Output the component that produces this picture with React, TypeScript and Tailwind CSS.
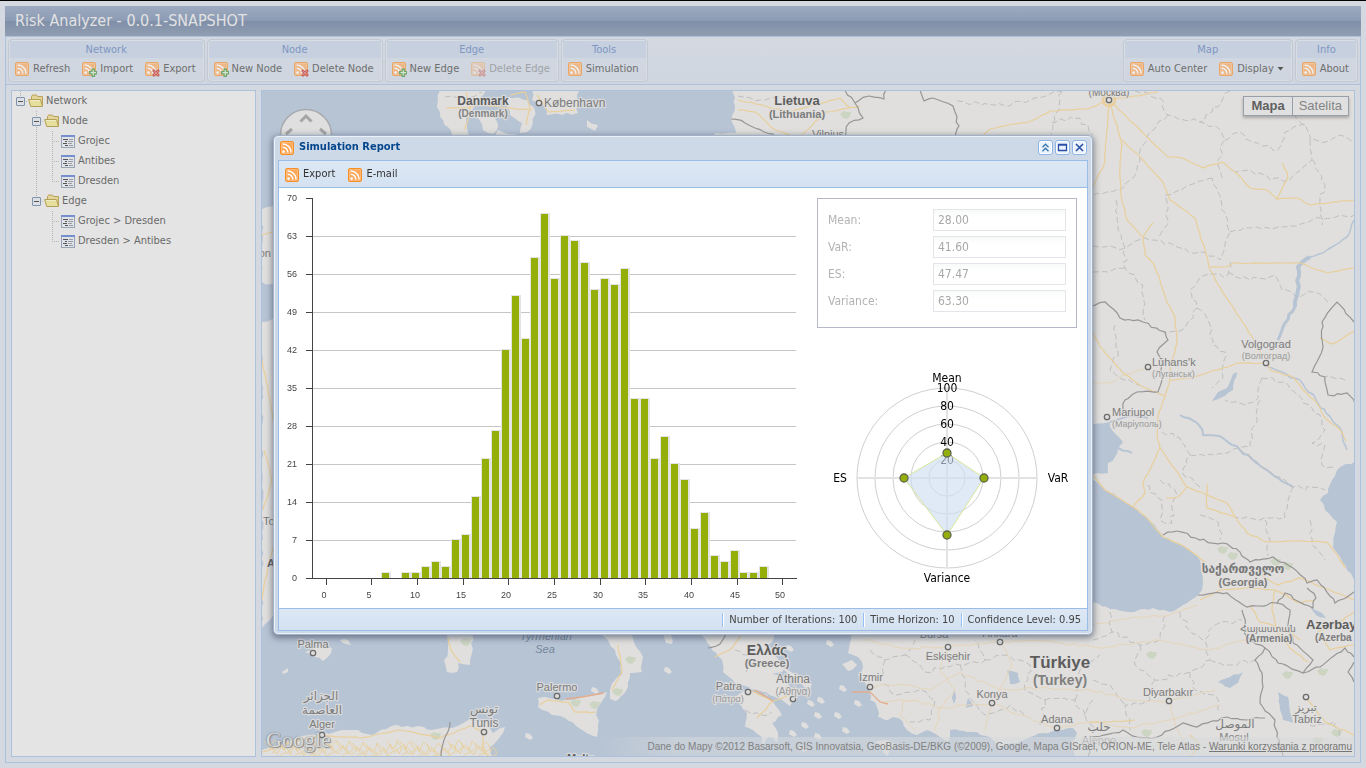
import React from "react";

type Point = [number, number];

const path = (points: Point[], close = false) =>
  "M" + points.map(([x, y]) => `${x} ${y}`).join("L") + (close ? "Z" : "");

/* Breaks straight runs into short irregular steps, as borders and coasts have. */
const rough = (points: Point[], amp: number, seed = 1, close = false) => {
  let s = seed * 7919 + 13;
  const rnd = () => {
    s = (s * 16807) % 2147483647;
    return s / 2147483647 - 0.5;
  };
  const src = close ? [...points, points[0]] : points;
  const out: Point[] = [src[0]];
  for (let i = 1; i < src.length; i++) {
    const [ax, ay] = src[i - 1];
    const [bx, by] = src[i];
    const n = Math.max(1, Math.round(Math.hypot(bx - ax, by - ay) / 5));
    for (let k = 1; k < n; k++) {
      const t = k / n;
      out.push([
        Math.round((ax + (bx - ax) * t + rnd() * amp) * 10) / 10,
        Math.round((ay + (by - ay) * t + rnd() * amp) * 10) / 10,
      ]);
    }
    out.push([bx, by]);
  }
  return path(out, close);
};

/* ---------------------------------------------------------------- icons */

type Badge = "plus" | "cross";

function FeedIcon({ badge, className = "" }: { badge?: Badge; className?: string }) {
  return (
    <svg width="16" height="16" viewBox="0 0 16 16" className={`shrink-0 ${className}`} aria-hidden="true">
      <rect x="1.500" y="1.500" width="13" height="13" rx="1.500" fill="#fda85a" stroke="#f98f22" />
      <rect x="2.500" y="2.500" width="11" height="11" rx="0.500" fill="none" stroke="#fbbf85" strokeWidth="0.800" />
      <circle cx="4.600" cy="11.600" r="1.300" fill="#fff" />
      <path d="M3.600 7.200a5.100 5.100 0 0 1 5.200 5.400M3.600 4.100a8.300 8.300 0 0 1 8.400 8.500" fill="none" stroke="#fff" strokeWidth="1.500" />
      {badge === "plus" && (
        <g>
          <path d="M10.500 7.500h3.500v2.500h2v3.500h-2V16h-3.500v-2.500H8v-3.500h2.500z" fill="#3f8f34" />
          <path d="M12.300 9v5.500M9.500 11.700h5.500" stroke="#d5efc6" strokeWidth="1.200" />
        </g>
      )}
      {badge === "cross" && (
        <g>
          <path d="M9 9l6 6M15 9l-6 6" stroke="#c0281f" strokeWidth="2.600" />
          <path d="M9.800 9.800l4.400 4.400M14.200 9.800l-4.400 4.400" stroke="#ee8d84" strokeWidth="0.700" />
        </g>
      )}
    </svg>
  );
}

function FolderIcon() {
  return (
    <svg width="16" height="16" viewBox="0 0 16 16" className="shrink-0" aria-hidden="true">
      <path d="M3.500 13V3.500l1-1.500h4l1 1.500h5V13z" fill="#e2d49a" stroke="#b9a15c" />
      <path d="M.7 6.500h11.800l2 7H2.700z" fill="#e5de9c" stroke="#b4a056" />
      <path d="M2 7.500h9.700" stroke="#f0ecc4" />
    </svg>
  );
}

function LeafIcon() {
  return (
    <svg width="16" height="16" viewBox="0 0 16 16" className="shrink-0" aria-hidden="true">
      <rect x="1.500" y="2.500" width="13" height="12" fill="#dfe2e8" stroke="#9aa3b3" />
      <path d="M1 3h14" stroke="#7590cc" strokeWidth="2" />
      <path d="M3 6.500h5M5 8.500h2M3 10.500h4M5 12.500h3" stroke="#555" />
      <path d="M9 6.500h4M8 8.500h5M8 10.500h4M9 12.500h4" stroke="#9a9ea5" />
    </svg>
  );
}

function Expander({ top, bottom }: { top: boolean; bottom: boolean }) {
  return (
    <svg width="16" height="20" viewBox="0 0 16 20" className="shrink-0" aria-hidden="true">
      {top && <path d="M8.500 0v6" stroke="#b5b5b5" strokeDasharray="1 1" />}
      {bottom && <path d="M8.500 16v4" stroke="#b5b5b5" strokeDasharray="1 1" />}
      <path d="M14 10.500h2" stroke="#b5b5b5" strokeDasharray="1 1" />
      <rect x="4.500" y="6.500" width="8" height="8" rx="0.500" fill="#dcdfe4" stroke="#8294ad" />
      <path d="M6 10.500h5" stroke="#555" />
    </svg>
  );
}

function Elbow({ kind }: { kind: "line" | "tee" | "end" | "none" }) {
  return (
    <svg width="16" height="20" viewBox="0 0 16 20" className="shrink-0" aria-hidden="true">
      {kind !== "none" && (
        <path d={kind === "end" ? "M8.500 0v11" : "M8.500 0v20"} stroke="#b5b5b5" strokeDasharray="1 1" />
      )}
      {(kind === "tee" || kind === "end") && <path d="M8 10.500h7" stroke="#b5b5b5" strokeDasharray="1 1" />}
    </svg>
  );
}

/* -------------------------------------------------------------- toolbar */

type Action = { label: string; badge?: Badge; disabled?: boolean; menu?: boolean };

function ButtonGroup({ title, actions }: { title: string; actions: Action[] }) {
  return (
    <section className="flex flex-col rounded-sm border border-[#c2c9d3] p-px shadow-[inset_0_0_0_1px_#d8dce3]">
      <h2 className="h-[17px] bg-[#c6d0df] text-center text-[11px] leading-[18px] text-[#7f97c2]">{title}</h2>
      <div className="flex h-[22px] items-center gap-2 px-1">
        {actions.map((a) => (
          <button
            key={a.label}
            type="button"
            disabled={a.disabled}
            className={`flex items-center gap-[3px] pr-[3px] text-[11px] leading-4 whitespace-nowrap text-[#6e6e6e] ${a.disabled ? "opacity-50" : ""}`}
          >
            <FeedIcon badge={a.badge} className="opacity-65" />
            {a.label}
            {a.menu && (
              <svg width="7" height="4" viewBox="0 0 7 4" aria-hidden="true">
                <path d="M0.500 0h6L3.500 3.500z" fill="#555" />
              </svg>
            )}
          </button>
        ))}
      </div>
    </section>
  );
}

/* ----------------------------------------------------------------- tree */

type Cell = "line" | "tee" | "end" | "none" | "open" | "openRoot" | "openLast";

const TREE: { label: string; cells: Cell[] }[] = [
  { label: "Network", cells: ["openRoot"] },
  { label: "Node", cells: ["none", "open"] },
  { label: "Grojec", cells: ["none", "line", "tee"] },
  { label: "Antibes", cells: ["none", "line", "tee"] },
  { label: "Dresden", cells: ["none", "line", "end"] },
  { label: "Edge", cells: ["none", "openLast"] },
  { label: "Grojec > Dresden", cells: ["none", "none", "tee"] },
  { label: "Dresden > Antibes", cells: ["none", "none", "end"] },
];

function Tree() {
  return (
    <ul className="text-[11px] text-[#6a6a6a]">
      {TREE.map(({ label, cells }) => {
        const folder = cells[cells.length - 1].startsWith("open");
        return (
          <li key={label} className="flex h-5 items-center">
            {cells.map((c, i) =>
              c === "open" || c === "openRoot" || c === "openLast" ? (
                <Expander key={i} top bottom={c === "open"} />
              ) : (
                <Elbow key={i} kind={c} />
              )
            )}
            {folder ? <FolderIcon /> : <LeafIcon />}
            <span className="pl-0.5 whitespace-nowrap">{label}</span>
          </li>
        );
      })}
    </ul>
  );
}

/* ------------------------------------------------------------------ map */

const LAND: Point[][] = [
  [[440,90],[437,107],[443,120],[448,127],[452,138],[470,138],[467,128],[466,117],[472,110],[477,100],[486,90]],
  [[477,117],[487,113],[495,118],[498,127],[493,134],[483,130]],
  [[508,97],[527,100],[535,110],[533,123],[527,132],[520,133],[522,123],[510,115],[507,107]],
  [[532,90],[580,90],[577,100],[578,113],[562,115],[547,115],[542,103],[532,100]],
  [[587,120],[598,125],[595,131],[587,127]],
  [[498,130],[508,134],[520,136],[520,140],[495,140]],
  [[262,209],[276,206],[276,286],[262,282]],
  [[262,322],[276,318],[276,612],[270,620],[262,628]],
  [[305,652],[318,647],[332,648],[327,658],[323,661],[315,657]],
  [[340,640],[348,640],[351,645],[343,643]],
  [[282,672],[288,668],[288,672],[283,674]],
  [[445,630],[473,630],[472,653],[470,665],[458,663],[457,672],[447,672],[444,660],[448,650]],
  [[595,630],[632,630],[635,645],[643,657],[642,672],[630,673],[628,687],[618,700],[610,699],[610,690],[615,680],[622,675],[621,663],[615,650],[608,640]],
  [[538,698],[545,697],[565,700],[582,697],[607,692],[597,710],[598,730],[597,737],[582,730],[565,718],[552,715],[538,707]],
  [[262,750],[275,745],[308,735],[335,732],[352,730],[372,735],[397,725],[402,727],[418,726],[432,730],[442,728],[455,727],[468,720],[488,723],[493,733],[505,727],[500,737],[490,747],[492,757],[262,757]],
  [[663,630],[673,630],[672,644],[666,643]],
  [[700,630],[712,650],[722,660],[723,672],[735,683],[755,690],[775,697],[790,706],[797,700],[795,690],[785,680],[772,674],[782,672],[785,668],[775,655],[768,645],[778,630]],
  [[735,697],[740,703],[747,713],[745,727],[753,730],[762,737],[763,748],[768,737],[773,738],[777,743],[778,733],[772,723],[778,717],[782,715],[773,702],[763,692],[750,688]],
  [[783,669],[797,674],[812,684],[810,689],[796,682]],
  [[842,664],[852,660],[857,665],[848,671]],
  [[875,742],[885,740],[895,744],[888,756],[882,750]],
  [[852,630],[848,653],[858,657],[863,667],[858,675],[865,682],[870,692],[870,700],[877,707],[878,717],[885,720],[893,717],[903,722],[907,730],[917,735],[927,730],[940,737],[948,742],[950,730],[973,732],[990,737],[1000,747],[1017,743],[1030,737],[1043,733],[1073,728],[1077,733],[1072,742],[1075,757],[1356,757],[1356,88],[732,88],[735,106],[731,119],[736,133],[716,133],[707,138]],
];

const WATER: Point[][] = [
  [[1060,423],[1093,424],[1110,422],[1112,430],[1123,442],[1118,448],[1115,457],[1108,463],[1108,473],[1060,474]],
  [[1060,480],[1093,480],[1105,490],[1117,497],[1133,507],[1147,518],[1163,537],[1187,548],[1200,560],[1203,580],[1202,590],[1198,595],[1187,603],[1170,612],[1153,608],[1130,612],[1110,609],[1093,602],[1060,600]],
  [[1356,461],[1340,467],[1332,480],[1328,493],[1320,500],[1325,510],[1337,522],[1335,533],[1333,547],[1343,563],[1347,570],[1356,582]],
  [[1237,372],[1233,390],[1212,401],[1218,392],[1227,388],[1233,374]],
  [[1218,682],[1230,677],[1243,672],[1238,683],[1230,688]],
  [[1278,692],[1288,697],[1293,723],[1283,720]],
  [[1007,670],[1018,673],[1020,682],[1010,684]],
  [[953,690],[956,698],[954,704],[952,698]],
  [[968,698],[973,706],[966,708]],
  [[1310,607],[1322,613],[1326,618],[1316,615]],
  [[735,690],[748,688],[757,690],[772,697],[778,700],[765,697],[752,692]],
];

const ROADS: Point[][] = [
  [[1109,100],[1088,109],[1051,111],[1031,121],[990,129],[982,137]],
  [[1109,100],[1107,130],[1104,165],[1090,192]],
  [[1109,100],[1100,94],[1092,97]],
  [[1109,100],[1135,96],[1158,92]],
  [[1109,100],[1118,130],[1122,145],[1120,170],[1121,195],[1127,220],[1143,237],[1145,255],[1153,263],[1160,280],[1167,303],[1175,317],[1177,343],[1170,367],[1170,380],[1165,397],[1158,417],[1157,437],[1160,448],[1143,483],[1145,493],[1133,507]],
  [[1143,237],[1153,223]],
  [[1109,100],[1140,130],[1152,142],[1168,157],[1182,158],[1203,168],[1222,162],[1235,172],[1250,188],[1267,190],[1277,199],[1297,198],[1310,205],[1354,200]],
  [[1277,199],[1288,177],[1283,163]],
  [[1122,140],[1143,160],[1163,182],[1170,200],[1195,218],[1207,257],[1210,270],[1223,293],[1240,318],[1253,338],[1267,363],[1270,370],[1293,377],[1303,390],[1317,403],[1325,418],[1340,430],[1346,441]],
  [[1210,267],[1227,267],[1233,263],[1300,263],[1327,273],[1354,268]],
  [[1170,380],[1190,378],[1223,368],[1237,363],[1264,363]],
  [[1090,328],[1103,350],[1123,373],[1143,387],[1165,396]],
  [[1160,448],[1187,487],[1207,495],[1227,503],[1235,517],[1247,533],[1267,542],[1297,541],[1327,542],[1335,552],[1345,568]],
  [[1207,484],[1207,508],[1235,517]],
  [[1090,472],[1105,490],[1117,497],[1133,507],[1147,518],[1163,537],[1185,547],[1205,562]],
  [[1187,487],[1178,497],[1166,498]],
  [[1320,338],[1333,344],[1354,331]],
  [[1200,600],[1220,590],[1245,588],[1275,590],[1300,603],[1315,600]],
  [[1275,590],[1272,610],[1277,632],[1290,648],[1308,662]],
  [[1262,575],[1278,585],[1300,578],[1330,590],[1354,600]],
  [[1250,605],[1260,622],[1282,628],[1300,640]],
  [[1354,612],[1335,625],[1318,632],[1330,650],[1354,645]],
  [[1090,722],[1110,722],[1135,720]],
  [[1190,735],[1200,745],[1190,757]],
  [[1306,697],[1325,722],[1354,735]],
  [[510,95],[525,92],[530,108],[526,125]],
  [[446,108],[468,108],[480,104],[505,108],[532,110]],
  [[466,92],[470,108],[465,130]],
  [[537,95],[548,112],[575,110]],
  [[738,110],[755,112],[775,130],[800,138]],
  [[738,100],[765,106],[790,112],[840,98],[850,108]],
  [[798,138],[826,112],[860,106]],
  [[715,657],[732,648],[742,634]],
  [[750,690],[773,701],[790,695]],
  [[773,701],[757,718]],
  [[448,638],[452,652],[460,662]],
  [[618,645],[622,672],[612,690]],
  [[540,705],[548,700],[568,702],[575,712],[596,712]],
  [[262,752],[290,742],[322,736],[360,738],[400,730],[440,738],[470,726],[484,732]],
  [[484,732],[482,745],[488,756]],
  [[262,235],[275,232]],[[262,360],[270,400],[275,440]],[[264,450],[272,480],[263,510]],
  [[275,540],[265,580],[262,600]],
];

const FAINT_ROADS: Point[][] = [
  [[863,640],[900,648],[948,647],[1000,642],[1040,640],[1100,648],[1160,640],[1210,650],[1247,640]],
  [[870,687],[900,684],[930,690],[960,672],[1000,690],[1040,688],[1090,690],[1130,700],[1169,701],[1215,690]],
  [[885,702],[915,700],[940,708],[992,703],[1020,715],[1057,728]],
  [[948,647],[940,670],[955,690],[940,708],[935,730]],
  [[1000,642],[1012,665],[992,703],[985,730]],
  [[1057,728],[1090,722],[1130,728],[1170,720],[1220,705]],
  [[1169,701],[1175,725],[1190,755]],
  [[905,700],[900,715],[915,730]],
  [[1093,625],[1130,618],[1165,616],[1198,605]],
  [[1093,382],[1110,383],[1125,375],[1148,367]],
];

const COUNTRY: Point[][] = [
  [[731,119],[745,123],[755,128],[773,134],[775,140]],
  [[845,90],[855,103],[863,118],[849,123],[845,138]],
  [[855,103],[869,96],[884,99],[886,90]],
  [[920,90],[924,101],[933,98],[953,106],[959,126],[953,138]],
  [[1090,306],[1105,302],[1120,318],[1143,322],[1165,332],[1168,340],[1157,352],[1162,363],[1162,380],[1158,392],[1137,392],[1125,400],[1123,409]],
  [[1354,322],[1337,302],[1330,310],[1322,322],[1323,347],[1312,372],[1325,377],[1328,395],[1347,393],[1355,404]],
  [[1163,535],[1177,531],[1200,540],[1223,543],[1240,552],[1250,562],[1273,557],[1293,568],[1307,583],[1317,580],[1335,603],[1354,592]],
  [[1198,595],[1227,593],[1247,607],[1277,603],[1285,593],[1313,608],[1316,598],[1307,588]],
  [[1242,610],[1247,637],[1265,648],[1278,663],[1303,673],[1313,660],[1293,643],[1288,625],[1290,610],[1277,603]],
  [[1265,648],[1255,660],[1262,673],[1263,687],[1260,703],[1275,720],[1277,737],[1283,757]],
  [[1303,673],[1320,667],[1345,648],[1354,657]],
  [[1354,662],[1348,672],[1354,682]],
  [[1113,733],[1123,730],[1137,737],[1157,737],[1183,723],[1197,727],[1227,717],[1247,720],[1265,718]],
  [[1113,733],[1090,737],[1088,757]],
  [[450,722],[444,740],[441,757]],
  [[708,648],[720,644],[726,634]],
];

const REGIONS: Point[][] = [
  [[957,101],[1005,106],[1030,100],[1062,92]],
  [[1062,92],[1055,120],[1052,138]],
  [[1052,122],[1080,118],[1093,135]],
  [[1135,91],[1160,98],[1168,115],[1200,122],[1220,130],[1225,140],[1218,165],[1222,178]],
  [[1230,91],[1212,112],[1200,122]],
  [[1225,140],[1240,132],[1260,145],[1278,150],[1285,132],[1305,125]],
  [[1285,110],[1305,125],[1310,140],[1325,142],[1340,135],[1354,140]],
  [[1310,140],[1312,160],[1290,180],[1270,180],[1250,170],[1235,172]],
  [[1168,115],[1150,132],[1140,150],[1135,175],[1120,190],[1093,196]],
  [[1212,178],[1190,185],[1165,195],[1168,220],[1160,238]],
  [[1312,160],[1325,185],[1320,200],[1322,225]],
  [[1093,246],[1125,248],[1145,238],[1180,248],[1207,255],[1220,260],[1230,232],[1222,205],[1212,178]],
  [[1230,232],[1250,228],[1290,226],[1320,218],[1354,215]],
  [[1116,200],[1118,225],[1125,248],[1125,268],[1143,285],[1145,320]],
  [[1093,272],[1125,268]],
  [[1230,262],[1228,275],[1205,275],[1190,290],[1197,308],[1210,325],[1213,345],[1225,352],[1223,378],[1212,388]],
  [[1228,272],[1250,280],[1275,275],[1282,290],[1300,297],[1315,292],[1328,302]],
  [[1197,308],[1185,328],[1163,332]],
  [[1115,325],[1118,350],[1110,370],[1120,378],[1140,385]],
  [[1262,378],[1258,398],[1245,405],[1225,400]],
  [[1262,378],[1285,382],[1303,403],[1320,415],[1325,430],[1312,443],[1325,445],[1322,465],[1333,467]],
  [[1260,400],[1255,425],[1250,447],[1238,448],[1215,455],[1190,455]],
  [[1162,432],[1180,438],[1190,455],[1182,472],[1200,487]],
  [[1240,450],[1267,470],[1293,487],[1325,490]],
  [[1293,487],[1285,518],[1260,520],[1235,517]],
  [[1160,480],[1175,490],[1172,523],[1160,520],[1162,500],[1145,485]],
  [[1200,515],[1218,522],[1220,540]],
  [[1265,520],[1270,540],[1268,556]],
  [[1310,520],[1312,545],[1325,560]],
  [[1345,380],[1325,377]],
  [[1110,612],[1112,632],[1140,645],[1160,640],[1165,616]],
  [[1093,640],[1112,632]],
  [[1140,645],[1135,665],[1155,680],[1190,672],[1210,660],[1205,640],[1215,625],[1242,620]],
  [[1180,612],[1190,630],[1205,640]],
  [[1210,660],[1230,665],[1255,660]],
  [[1155,680],[1150,700],[1125,705],[1130,730]],
  [[1190,672],[1195,690],[1215,695],[1220,712]],
  [[1093,680],[1110,685],[1125,705]],
  [[1093,700],[1085,715],[1095,728]],
  [[870,650],[885,660],[905,655],[915,640]],
  [[885,660],[880,680],[895,695],[920,690],[935,700],[930,720],[910,722]],
  [[905,655],[925,672],[960,665],[985,660],[975,640]],
  [[985,660],[1005,655],[1030,665],[1025,690],[1045,700],[1040,725]],
  [[960,665],[965,690],[985,715],[1010,705],[1025,715]],
  [[1045,700],[1075,700],[1085,715]],
  [[1075,700],[1080,670],[1100,655]],
  [[735,650],[750,660],[745,675]],
  [[745,710],[760,715],[772,712]],
  [[738,96],[760,100],[780,94]],
  [[445,97],[470,97],[482,93]],
  [[1310,725],[1335,722],[1340,740]],
];

const AFRICAN_CELLS: Point[] = Array.from({ length: 33 }, (_, i) => [270 + i * 6.8, 741 + ((i * 5) % 9)] as Point);

const ISLETS: Point[] = [
  [665, 667], [808, 700], [815, 712], [827, 640], [840, 685], [835, 712], [843, 727], [802, 722], [790, 730],
  [815, 733], [855, 700], [800, 745], [725, 682], [592, 687], [526, 733], [787, 645], [818, 697],
];

const PARKS: Point[] = [
  [845, 115], [1222, 550], [1232, 556], [1275, 562], [1287, 566], [1287, 675], [1322, 672], [1336, 733],
  [1151, 655], [575, 703], [594, 705], [630, 660], [617, 692], [465, 642], [1146, 733], [1317, 741], [435, 736],
];

type Label = {
  x: number;
  y: number;
  t: string;
  s: number;
  b?: boolean;
  a?: "start" | "middle" | "end";
  c?: string;
  i?: boolean;
};

const LABELS: Label[] = [
  { x: 483, y: 105, t: "Danmark", s: 12, b: true },
  { x: 483, y: 117, t: "(Denmark)", s: 10, b: true, c: "#858585" },
  { x: 544, y: 107, t: "København", s: 12, a: "start" },
  { x: 797, y: 105, t: "Lietuva", s: 13, b: true },
  { x: 797, y: 118, t: "(Lithuania)", s: 11, b: true, c: "#7c7c7c" },
  { x: 828, y: 138, t: "Vilnius", s: 11 },
  { x: 1109, y: 96, t: "(Москва)", s: 10 },
  { x: 1266, y: 348, t: "Volgograd", s: 11 },
  { x: 1266, y: 359, t: "(Волгоград)", s: 9, c: "#999" },
  { x: 1152, y: 366, t: "Lūhans'k", s: 11, a: "start" },
  { x: 1152, y: 377, t: "(Луганськ)", s: 9, a: "start", c: "#999" },
  { x: 1112, y: 416, t: "Mariupol", s: 11, a: "start" },
  { x: 1112, y: 427, t: "(Маріуполь)", s: 9, a: "start", c: "#999" },
  { x: 1243, y: 573, t: "საქართველო", s: 12, b: true, c: "#777" },
  { x: 1243, y: 586, t: "(Georgia)", s: 11, b: true, c: "#7c7c7c" },
  { x: 1268, y: 632, t: "Հայաստան", s: 9, c: "#777" },
  { x: 1269, y: 642, t: "(Armenia)", s: 10, b: true, c: "#7c7c7c" },
  { x: 1306, y: 629, t: "Azərbay", s: 13, b: true, a: "start" },
  { x: 1315, y: 641, t: "(Azerba", s: 10, b: true, a: "start", c: "#7c7c7c" },
  { x: 1060, y: 668, t: "Türkiye", s: 17, b: true },
  { x: 1060, y: 685, t: "(Turkey)", s: 14, b: true, c: "#808080" },
  { x: 1168, y: 696, t: "Diyarbakır", s: 11 },
  { x: 1057, y: 723, t: "Adana", s: 11 },
  { x: 1099, y: 731, t: "حلب", s: 12 },
  { x: 1099, y: 744, t: "Aleppo", s: 11, c: "#999" },
  { x: 1235, y: 728, t: "الموصل", s: 12 },
  { x: 1234, y: 741, t: "Mosul", s: 11, c: "#858585" },
  { x: 1306, y: 711, t: "تبريز", s: 11 },
  { x: 1307, y: 723, t: "Tabriz", s: 11 },
  { x: 871, y: 681, t: "Izmir", s: 11 },
  { x: 948, y: 660, t: "Eskişehir", s: 11 },
  { x: 934, y: 638, t: "Bursa", s: 11 },
  { x: 1000, y: 637, t: "Ankara", s: 11 },
  { x: 992, y: 698, t: "Konya", s: 11 },
  { x: 767, y: 655, t: "Ελλάς", s: 14, b: true },
  { x: 767, y: 667, t: "(Greece)", s: 11, b: true, c: "#7c7c7c" },
  { x: 793, y: 683, t: "Athina", s: 12 },
  { x: 793, y: 695, t: "(Αθήνα)", s: 10, c: "#999" },
  { x: 729, y: 690, t: "Patra", s: 11 },
  { x: 728, y: 702, t: "(Πάτρα)", s: 9, c: "#999" },
  { x: 313, y: 648, t: "Palma", s: 11 },
  { x: 557, y: 691, t: "Palermo", s: 11 },
  { x: 546, y: 640, t: "Tyrrhenian", s: 11, i: true, c: "#76869b" },
  { x: 545, y: 653, t: "Sea", s: 11, i: true, c: "#76869b" },
  { x: 321, y: 700, t: "الجزائر", s: 12 },
  { x: 322, y: 714, t: "العاصمة", s: 12 },
  { x: 322, y: 728, t: "Alger", s: 11 },
  { x: 484, y: 713, t: "تونس", s: 12 },
  { x: 484, y: 727, t: "Tunis", s: 12 },
  { x: 581, y: 762, t: "Malta", s: 11, b: true },
  { x: 271, y: 257, t: "on", s: 11, a: "end" },
  { x: 263, y: 525, t: "To", s: 11, a: "start" },
  { x: 267, y: 567, t: "A", s: 11, b: true, a: "start" },
];

const CITIES: Point[] = [
  [539, 103], [1266, 363], [1148, 367], [1107, 417], [1169, 701], [1057, 728], [1306, 697], [870, 687],
  [948, 647], [1000, 642], [992, 703], [793, 699], [748, 692], [313, 653], [557, 696], [322, 735],
  [484, 732], [1109, 100],
];

function MapDrawing() {
  return (
    <svg
      viewBox="262 91 1092 665"
      preserveAspectRatio="xMidYMid slice"
      className="block h-full w-full font-['Liberation_Sans','DejaVu_Sans',sans-serif]"
      role="img"
      aria-label="Map of Europe"
    >
      <rect x="262" y="91" width="1092" height="665" fill="#b7c4d4" />
      <g fill="#e0dfdd">
        {LAND.map((p, i) => (
          <path key={i} d={rough(p, 3, i + 1, true)} />
        ))}
        {ISLETS.map(([x, y]) => (
          <path key={`${x}-${y}`} d={`M${x} ${y}l4 1l3 4l-3 2l-5 -3z`} />
        ))}
      </g>
      <g fill="#b7c4d4">
        {WATER.map((p, i) => (
          <path key={i} d={rough(p, 2.5, i + 40, true)} />
        ))}
      </g>
      <g fill="#cbd5c1">
        {PARKS.map(([x, y]) => (
          <path key={`${x}-${y}`} d={`M${x - 5} ${y - 1}l4 -3l3 1l4 0l-1 4l-3 3l-4 -1z`} />
        ))}
      </g>
      <g fill="none" stroke="#b7c4d4" strokeWidth="2">
        <path d={rough([[1354,220],[1347,237],[1327,250],[1310,257]], 2, 3)} strokeWidth="1.500" />
        <path d={rough([[1310,257],[1298,267],[1298,290],[1295,307]], 3, 4)} strokeWidth="4" />
        <path d={rough([[1295,307],[1285,323],[1278,340]], 2, 5)} strokeWidth="3" />
        <path d={rough([[1180,415],[1197,423],[1203,435],[1223,438],[1240,450],[1267,470],[1293,487]], 3, 6)} />
        <path d={rough([[1268,367],[1300,380],[1318,403],[1342,432],[1347,450]], 3, 7)} strokeWidth="1.500" />
        <path d={rough([[1118,448],[1132,453]], 2, 8)} />
        <path d={rough([[1110,422],[1130,416],[1148,418]], 2, 9)} />
      </g>
      <g fill="none" stroke="#bfbfbf" strokeDasharray="6 3">
        {REGIONS.map((p, i) => (
          <path key={i} d={rough(p, 4.5, i + 80)} />
        ))}
      </g>
      <g fill="none" stroke="#e6d5b8">
        {FAINT_ROADS.map((p, i) => (
          <path key={i} d={rough(p, 2.5, i + 300)} />
        ))}
      </g>
      <g fill="none" stroke="#e8cf9b" strokeWidth="1.200">
        {ROADS.map((p, i) => (
          <path key={i} d={rough(p, 1.2, i + 160)} />
        ))}
        {AFRICAN_CELLS.map(([x, y], i) => (
          <path key={i} d={rough([[x - 6, y], [x, y + 8], [x + 5, y - 1], [x + 9, y + 6], [x + 2, y + 12]], 3, i + 220)} strokeWidth="0.900" />
        ))}
        <circle cx="1109" cy="100" r="6" strokeWidth="2.500" />
      </g>
      <path d="M870 692h-18M870 692l10 10l8 2M755 690l18 11M566 699l16 -2l22 -4" fill="none" stroke="#e3ac8c" strokeWidth="1.300" />
      <g fill="none" stroke="#969696" strokeWidth="1.200">
        {COUNTRY.map((p, i) => (
          <path key={i} d={rough(p, 3, i + 260)} />
        ))}
      </g>
      <g fill="#dedede" stroke="#6c6c6c" strokeWidth="1.300">
        {CITIES.map(([x, y]) => (
          <circle key={`${x}-${y}`} cx={x} cy={y} r="2.700" />
        ))}
      </g>
      <g stroke="#e0dfdd" strokeWidth="2.500" strokeLinejoin="round" style={{ paintOrder: "stroke" }}>
        {LABELS.map((l) => (
          <text
            key={l.t}
            x={l.x}
            y={l.y}
            fontSize={l.s}
            fontWeight={l.b ? 700 : 400}
            fontStyle={l.i ? "italic" : "normal"}
            textAnchor={l.a ?? "middle"}
            fill={l.c ?? (l.b ? "#5d5d5d" : "#7c7c7c")}
            strokeOpacity={l.i ? 0 : 0.8}
          >
            {l.t}
          </text>
        ))}
      </g>
    </svg>
  );
}

function MapPanel() {
  return (
    <main className="relative flex-1 overflow-hidden border border-[#acc1dc]">
      <div className="absolute inset-0">
        <MapDrawing />
      </div>
      <svg width="54" height="54" viewBox="0 0 54 54" className="absolute top-[17px] left-[17px]" aria-hidden="true">
        <circle cx="27" cy="27" r="25.500" fill="#dfdfdf" stroke="#a7abb0" strokeWidth="1.500" />
        <path d="M21.500 13.500l5.500-5.500l5.500 5.500M7 26l6-5M47 26l-6-5" fill="none" stroke="#a5a5a5" strokeWidth="3" />
      </svg>
      <div className="absolute top-[5px] right-[5px] flex border border-[#999fa8] bg-[#e0e0e0] font-['Liberation_Sans',sans-serif] text-[13px] leading-[18px] shadow-[0_2px_3px_rgba(0,0,0,0.25)]">
        <button type="button" className="border-r border-[#999fa8] px-[7px] font-bold text-[#606060]">Mapa</button>
        <button type="button" className="px-1.5 text-[#858585]">Satelita</button>
      </div>
      <span className="absolute bottom-0 left-1 font-['Liberation_Serif',serif] text-[22px] leading-8 text-[#d8dadb] [text-shadow:0_0_2px_#6f7378,1px_1px_1px_#8c9096]">
        Google
      </span>
      <footer className="absolute right-0 bottom-0 bg-linear-to-r from-[#d4d8dc00] via-[#d4d8dc90] via-10% to-[#d9dadb90] pr-0.5 pl-12 font-['Liberation_Sans',sans-serif] text-[10px] leading-[19px] whitespace-nowrap text-[#808080]">
        Dane do Mapy ©2012 Basarsoft, GIS Innovatsia, GeoBasis-DE/BKG (©2009), Google, Mapa GISrael, ORION-ME, Tele Atlas -{" "}
        <a href="#terms" className="text-[#777] underline">Warunki korzystania z programu</a>
      </footer>
    </main>
  );
}

/* --------------------------------------------------------------- report */

const HISTOGRAM: Point[] = [
  [382, 1], [402, 1], [412, 1], [422, 2], [432, 3], [442, 2], [452, 7], [462, 8], [472, 15], [482, 22],
  [492, 27], [502, 42], [512, 52], [522, 44], [531, 59], [541, 67], [551, 55], [561, 63], [571, 62],
  [581, 58], [591, 53], [601, 55], [611, 54], [621, 57], [631, 33], [641, 33], [651, 22], [661, 26],
  [671, 21], [681, 18], [691, 9], [701, 12], [711, 4], [721, 3], [731, 5], [740, 1], [750, 1], [760, 2],
];

const X_TICKS = [326, 371, 417, 463, 508, 554, 600, 645, 691, 737, 782];
const Y_TICKS = [0, 7, 14, 21, 28, 35, 42, 49, 56, 63, 70];

function Histogram() {
  const yOf = (v: number) => 578 - Math.round((v * 380) / 70);
  return (
    <svg viewBox="279 188 530 420" className="w-[530px] font-['Liberation_Sans',sans-serif]" role="img" aria-label="Histogram of simulation results">
      {Y_TICKS.slice(1, -1).map((v) => (
        <path key={v} d={`M313 ${yOf(v) + 0.5}H796`} stroke="#c6c6c6" />
      ))}
      {HISTOGRAM.map(([x, v]) => (
        <rect key={x} x={x - 1} y={yOf(v) - 1} width="10" height={579 - yOf(v)} fill="#e4e4e4" />
      ))}
      {HISTOGRAM.map(([x, v]) => (
        <rect key={x} x={x} y={yOf(v)} width="7" height={578 - yOf(v)} fill="#94ae0a" />
      ))}
      <path d="M312.500 198V578.500H797" fill="none" stroke="#444" />
      {Y_TICKS.map((v) => (
        <path key={v} d={`M306 ${yOf(v) + 0.5}h7`} stroke="#444" />
      ))}
      {X_TICKS.map((x) => (
        <path key={x} d={`M${x + 0.5} 579v6`} stroke="#444" />
      ))}
      <g fontSize="9" fill="#444">
        {Y_TICKS.map((v) => (
          <text key={v} x="297" y={yOf(v) + 3} textAnchor="end">{v}</text>
        ))}
        {X_TICKS.map((x, i) => (
          <text key={x} x={x - 2} y="598" textAnchor="middle">{i * 5}</text>
        ))}
      </g>
    </svg>
  );
}

function Radar() {
  return (
    <svg viewBox="817 368 260 222" className="w-[260px] font-['DejaVu_Sans_Condensed','DejaVu_Sans',sans-serif]" role="img" aria-label="Radar chart of risk measures">
      <g fill="none" stroke="#d0d0d0">
        {[18, 36, 54, 72, 90].map((r) => (
          <circle key={r} cx="947" cy="478" r={r} />
        ))}
      </g>
      <path d="M857 478H1037M947 388V568" stroke="#e2e2e2" strokeWidth="2" />
      <g fontSize="12" textAnchor="middle" fill="#000">
        {[20, 40, 60, 80, 100].map((v) => (
          <text key={v} x="947" y={482 - v * 0.9}>{v}</text>
        ))}
        <text x="947" y="382">Mean</text>
        <text x="1058" y="482">VaR</text>
        <text x="947" y="582">Variance</text>
        <text x="840" y="482">ES</text>
      </g>
      <path d="M947 453L984 478L947 535L904 478Z" fill="#cfdff2" fillOpacity="0.650" stroke="#d6e59a" />
      {([[947, 453], [984, 478], [947, 535], [904, 478]] as Point[]).map(([x, y]) => (
        <circle key={`${x}-${y}`} cx={x} cy={y} r="4" fill="#94ae0a" stroke="#5d664e" strokeWidth="1.300" />
      ))}
    </svg>
  );
}

const MEASURES = [
  ["Mean", "28.00"],
  ["VaR", "41.60"],
  ["ES", "47.47"],
  ["Variance", "63.30"],
];

function ToolButton({ label, children }: { label: string; children: React.ReactNode }) {
  return (
    <button type="button" aria-label={label} className="size-[15px] rounded-[3px] border border-[#8fb4e6] bg-[#eaf3fd] shadow-[inset_0_0_0_1px_#fff]">
      <svg width="13" height="13" viewBox="0 0 13 13" fill="none" aria-hidden="true">{children}</svg>
    </button>
  );
}

function ReportWindow() {
  return (
    <div role="dialog" aria-labelledby="report-title" className="w-[820px] rounded-[5px] border border-[#a2b1c6] bg-[#ced9e7] px-1 pb-[3px] shadow-[0_2px_6px_1px_rgba(60,70,90,0.6),inset_0_0_0_1px_#eaf1fa]">
      <header className="flex h-6 items-center gap-1 pr-px pl-px">
        <FeedIcon />
        <h1 id="report-title" className="flex-1 text-[11px] font-bold text-[#04468c]">Simulation Report</h1>
        <div className="flex gap-0.5">
          <ToolButton label="Collapse">
            <path d="M3.500 6.200l3-3l3 3M3.500 10.200l3-3l3 3" stroke="#3c78ad" strokeWidth="1.400" />
          </ToolButton>
          <ToolButton label="Maximize">
            <path d="M2.500 3.500h8v6h-8zM2 4h9" stroke="#2c50a5" strokeWidth="1.300" />
          </ToolButton>
          <ToolButton label="Close">
            <path d="M3 3l7 7M10 3l-7 7" stroke="#2c50a5" strokeWidth="1.600" />
          </ToolButton>
        </div>
      </header>
      <div className="border border-[#99bce8] bg-white">
        <div className="flex h-[27px] items-center gap-3 border-b border-[#99bce8] bg-linear-to-b from-[#dde8f4] to-[#d3e1f1] pt-0.5 pl-[5px] text-[11px] text-[#333]">
          <button type="button" className="flex items-center gap-[3px]"><FeedIcon />Export</button>
          <button type="button" className="flex items-center gap-[3px]"><FeedIcon />E-mail</button>
        </div>
        <div className="flex justify-between pr-2.5">
          <Histogram />
          <div className="flex flex-col justify-between pt-2.5 pb-[18px]">
            <div className="flex w-[260px] flex-col gap-[5px] border border-[#b5b8c8] px-2.5 pt-2.5 pb-[15px]">
              {MEASURES.map(([name, value]) => (
                <div key={name} className="flex h-[22px] items-center text-[12px] text-[#b3b3b3]">
                  <label htmlFor={`m-${name}`} className="w-[105px]">{name}:</label>
                  <input
                    id={`m-${name}`}
                    disabled
                    defaultValue={value}
                    className="h-[22px] w-[133px] border border-[#e4e5ea] bg-linear-to-b from-[#f8fafa] to-white to-40% px-1 text-[#a8a8a8]"
                  />
                </div>
              ))}
            </div>
            <Radar />
          </div>
        </div>
        <div className="flex h-[22px] items-center justify-end border-t border-[#99bce8] bg-linear-to-b from-[#dde8f4] to-[#d3e1f1] pt-0.5 text-[11px] text-[#444]">
          {["Number of Iterations: 100", "Time Horizon: 10", "Confidence Level: 0.95"].map((t) => (
            <span key={t} className="border-l border-[#98c0f4] px-1.5 leading-[14px] whitespace-nowrap shadow-[inset_1px_0_0_#fff]">{t}</span>
          ))}
        </div>
      </div>
    </div>
  );
}

/* ------------------------------------------------------------------ app */

export default function App() {
  return (
    <div className="flex min-h-screen flex-col border-t border-black bg-[#d4d8e0] px-[5px] pt-[5px] pb-[5px] font-['DejaVu_Sans_Condensed','DejaVu_Sans',sans-serif]">
      <header className="h-[30px] bg-[linear-gradient(#9daac0,#8c9bb4_50%,#7f8fa8_50%,#919eb1)] px-2.5 text-[16px] leading-[30px] text-[#e2e2e2]">
        Risk Analyzer - 0.0.1-SNAPSHOT
      </header>
      <div className="flex flex-1 flex-col border border-[#acc1dc]">
        <nav className="flex justify-between border-b border-[#acc1dc] bg-linear-to-b from-[#d4d9e1] to-[#ced5df] p-0.5">
          <div className="flex gap-0.5">
            <ButtonGroup title="Network" actions={[{ label: "Refresh" }, { label: "Import", badge: "plus" }, { label: "Export", badge: "cross" }]} />
            <ButtonGroup title="Node" actions={[{ label: "New Node", badge: "plus" }, { label: "Delete Node", badge: "cross" }]} />
            <ButtonGroup title="Edge" actions={[{ label: "New Edge", badge: "plus" }, { label: "Delete Edge", badge: "cross", disabled: true }]} />
            <ButtonGroup title="Tools" actions={[{ label: "Simulation" }]} />
          </div>
          <div className="flex gap-0.5">
            <ButtonGroup title="Map" actions={[{ label: "Auto Center" }, { label: "Display", menu: true }]} />
            <ButtonGroup title="Info" actions={[{ label: "About" }]} />
          </div>
        </nav>
        <div className="flex flex-1 gap-[5px] p-[5px]">
          <aside className="w-[245px] border border-[#acc1dc] bg-[#e4e4e4]">
            <Tree />
          </aside>
          <MapPanel />
        </div>
      </div>
      <div className="fixed inset-0 flex items-center justify-center pt-px">
        <ReportWindow />
      </div>
    </div>
  );
}
